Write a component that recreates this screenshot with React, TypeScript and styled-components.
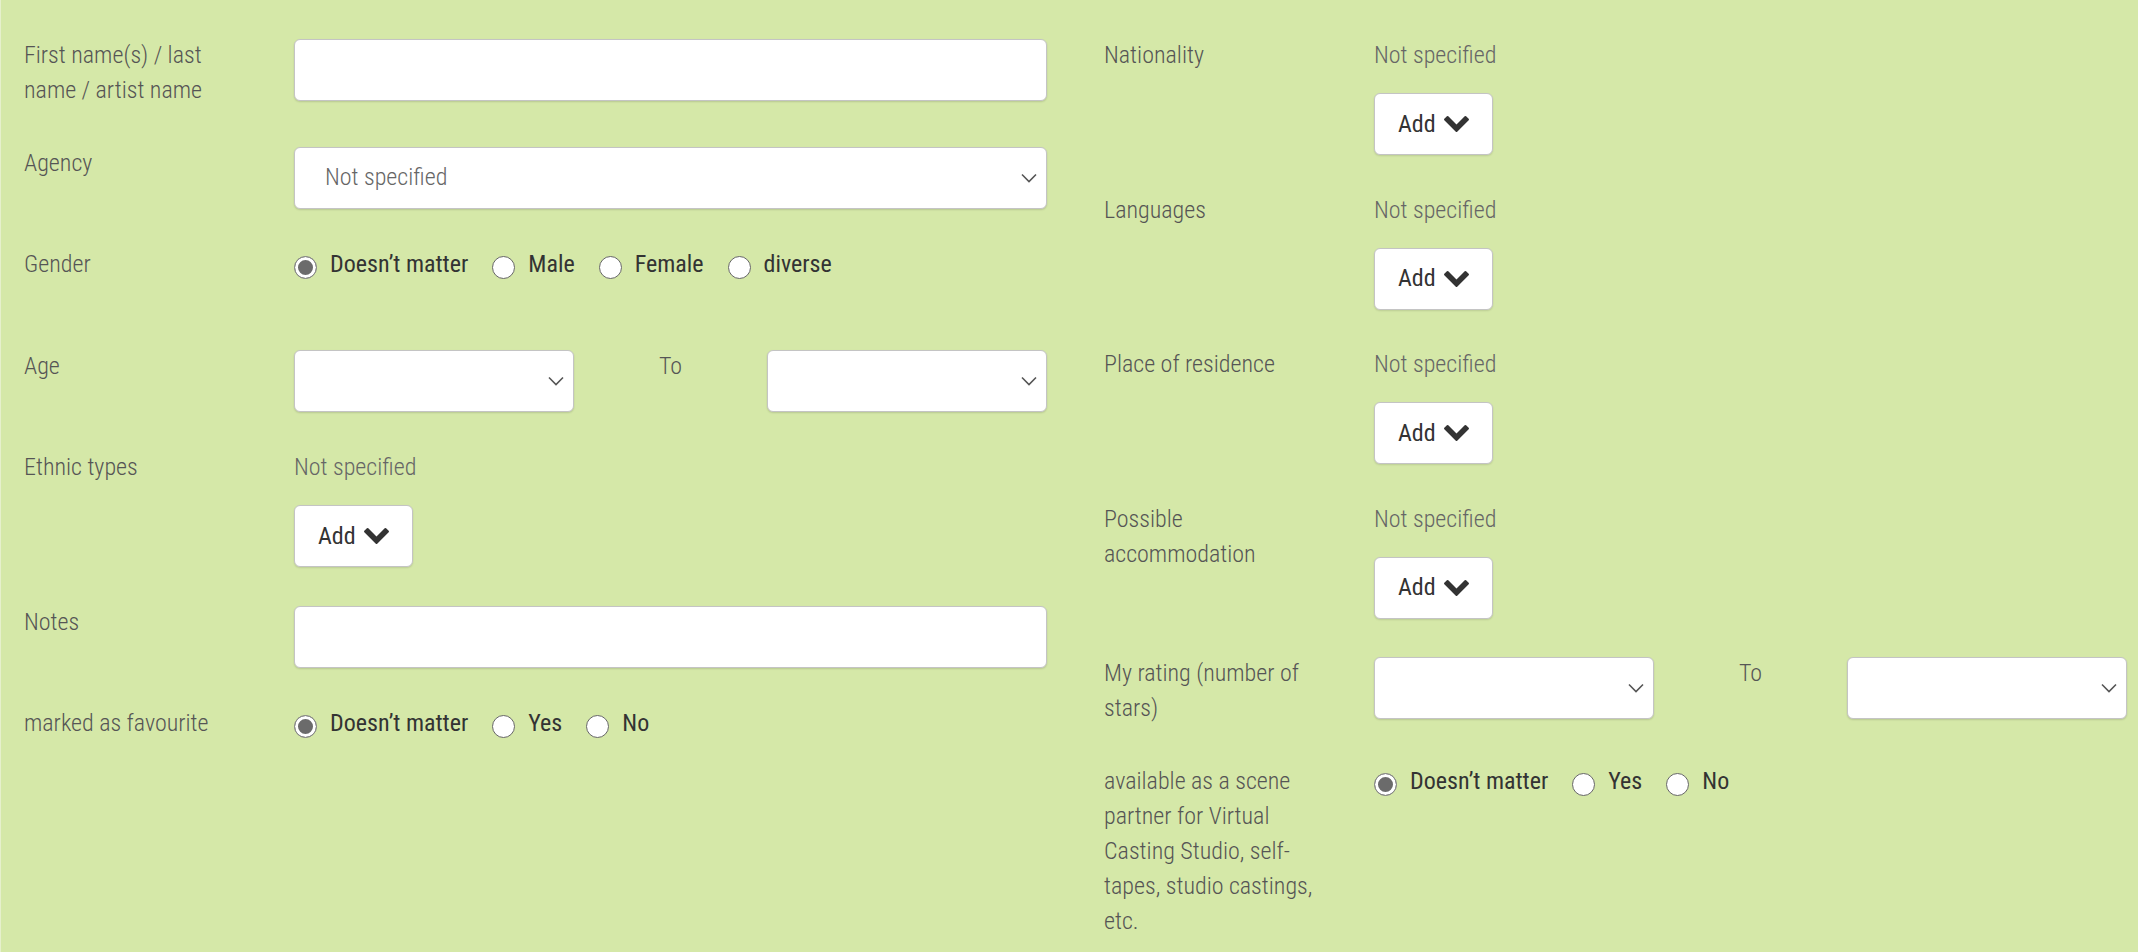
import styled, { createGlobalStyle } from 'styled-components'

const GlobalStyle = createGlobalStyle`
  html, body {
    margin: 0;
    padding: 0;
    background: #d5e8a8;
  }
  * {
    box-sizing: border-box;
  }
`

const Page = styled.div`
  display: grid;
  grid-template-columns: 1023px 1023px;
  column-gap: 57px;
  align-items: start;
  min-height: 952px;
  padding: 38px 0 0 23px;
  background: #d5e8a8;
  border-left: 1px solid #e6f0cc;
  font-family: 'Roboto Condensed', 'Liberation Sans Narrow', 'DejaVu Sans Condensed', Roboto, sans-serif;
  font-stretch: condensed;
  font-size: 24px;
  line-height: 35px;
`

const Column = styled.div`
  display: flex;
  flex-direction: column;
`

const Field = styled.div`
  display: grid;
  grid-template-columns: 270px 1fr;
  align-items: start;
  min-height: 64px;
  margin-bottom: 37.5px;
`

const Label = styled.div`
  max-width: 218px;
  color: #555;
  font-weight: 300;
`

const Control = styled.div`
  display: flex;
  flex-direction: column;
  align-items: flex-start;
`

const TextInput = styled.input`
  width: 100%;
  height: 62px;
  margin-top: 1px;
  padding: 0 30px;
  border: 1px solid #c4c4c4;
  border-radius: 6px;
  background: #fff;
  box-shadow: 0 1px 2px rgba(0, 0, 0, 0.14);
  font: inherit;
  outline: none;
`

const SelectBox = styled.div`
  display: flex;
  align-items: center;
  justify-content: space-between;
  width: 100%;
  height: 62px;
  margin-top: 1px;
  padding: 0 9px 0 30px;
  border: 1px solid #c4c4c4;
  border-radius: 6px;
  background: #fff;
  box-shadow: 0 1px 2px rgba(0, 0, 0, 0.14);
  color: #666;
  font-weight: 300;
`

const Range = styled.div`
  display: grid;
  grid-template-columns: 280px 1fr 280px;
  width: 100%;
  align-items: start;
`

const RangeTo = styled.div`
  text-align: center;
  color: #555;
  font-weight: 300;
`

const Value = styled.div`
  color: #666;
  font-weight: 300;
`

const AddButton = styled.button`
  display: inline-flex;
  align-items: center;
  gap: 8px;
  height: 62px;
  margin-top: 20px;
  padding: 0 23px 0 23px;
  border: 1px solid #c4c4c4;
  border-radius: 6px;
  background: #fff;
  box-shadow: 0 1px 2px rgba(0, 0, 0, 0.12);
  color: #333;
  font: inherit;
  font-weight: 400;
`

const RadioGroup = styled.div`
  display: flex;
  align-items: flex-start;
  gap: 24px;
`

const RadioItem = styled.label`
  display: flex;
  align-items: flex-start;
  gap: 13px;
  color: #333;
  font-weight: 400;
  white-space: nowrap;
`

const RadioCircle = styled.span<{ $checked?: boolean }>`
  flex: none;
  width: 23px;
  height: 23px;
  margin-top: 9px;
  border-radius: 50%;
  border: 1.5px solid ${({ $checked }) => ($checked ? '#888' : '#666')};
  background: ${({ $checked }) => ($checked ? '#6b6b6b' : '#fff')};
  box-shadow: ${({ $checked }) => ($checked ? 'inset 0 0 0 3px #fff' : 'none')};
`

const SelectChevron = () => (
  <svg width="16" height="10" viewBox="0 0 16 10" fill="none">
    <path d="M1 1.5 L8 8.5 L15 1.5" stroke="#555" strokeWidth="1.6" />
  </svg>
)

// bold chevron-down, as in the old icon font
const AddChevron = () => (
  <svg width="25" height="16" viewBox="90 533 1612 1035">
    <path
      fill="#333"
      d="M1683 808l-742 741q-19 19-45 19t-45-19l-742-741q-19-19-19-45.5t19-45.5l166-165q19-19 45-19t45 19l531 531 531-531q19-19 45-19t45 19l166 165q19 19 19 45.5t-19 45.5z"
    />
  </svg>
)

const Select = ({ value }: { value?: string }) => (
  <SelectBox>
    <span>{value}</span>
    <SelectChevron />
  </SelectBox>
)

const Add = () => (
  <AddButton type="button">
    Add
    <AddChevron />
  </AddButton>
)

const Radios = ({ options }: { options: string[] }) => (
  <RadioGroup>
    {options.map((o, i) => (
      <RadioItem key={o}>
        <RadioCircle $checked={i === 0} />
        {o}
      </RadioItem>
    ))}
  </RadioGroup>
)

const Picker = () => (
  <Control>
    <Value>Not specified</Value>
    <Add />
  </Control>
)

const FromTo = () => (
  <Range>
    <Select />
    <RangeTo>To</RangeTo>
    <Select />
  </Range>
)

export default function App() {
  return (
    <>
      <GlobalStyle />
      <Page>
        <Column>
          <Field>
            <Label>First name(s) / last name / artist name</Label>
            <TextInput />
          </Field>
          <Field>
            <Label>Agency</Label>
            <Select value="Not specified" />
          </Field>
          <Field>
            <Label>Gender</Label>
            <Radios options={['Doesn’t matter', 'Male', 'Female', 'diverse']} />
          </Field>
          <Field>
            <Label>Age</Label>
            <FromTo />
          </Field>
          <Field>
            <Label>Ethnic types</Label>
            <Picker />
          </Field>
          <Field>
            <Label>Notes</Label>
            <TextInput />
          </Field>
          <Field>
            <Label>marked as favourite</Label>
            <Radios options={['Doesn’t matter', 'Yes', 'No']} />
          </Field>
        </Column>
        <Column>
          <Field>
            <Label>Nationality</Label>
            <Picker />
          </Field>
          <Field>
            <Label>Languages</Label>
            <Picker />
          </Field>
          <Field>
            <Label>Place of residence</Label>
            <Picker />
          </Field>
          <Field>
            <Label>Possible accommodation</Label>
            <Picker />
          </Field>
          <Field>
            <Label>My rating (number of stars)</Label>
            <FromTo />
          </Field>
          <Field>
            <Label>available as a scene partner for Virtual Casting Studio, self-tapes, studio castings, etc.</Label>
            <Radios options={['Doesn’t matter', 'Yes', 'No']} />
          </Field>
        </Column>
      </Page>
    </>
  )
}
